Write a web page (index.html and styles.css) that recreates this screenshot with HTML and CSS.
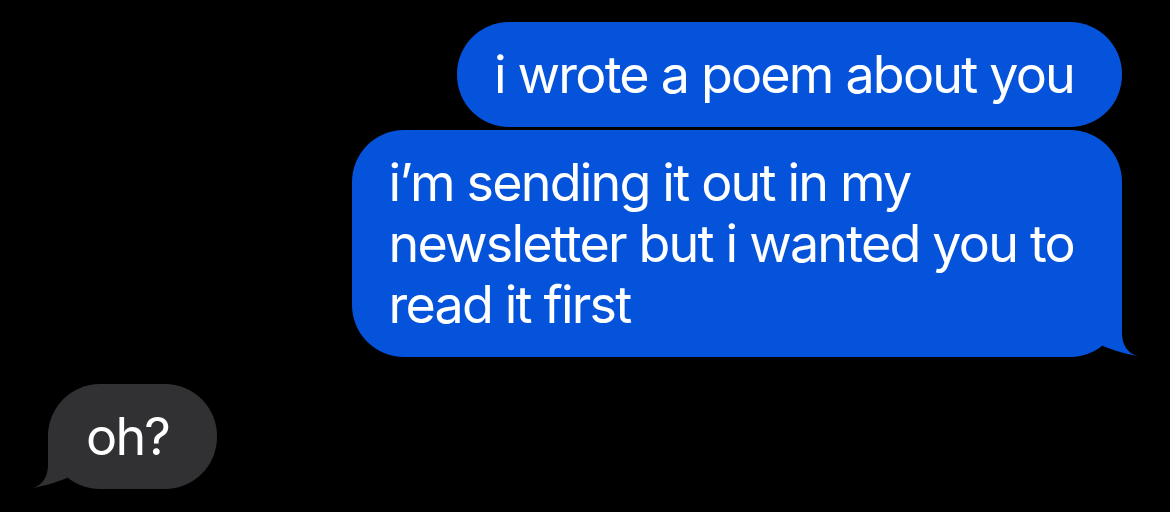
FILE: index.html
```html
<!DOCTYPE html>
<html lang="en">
<head>
  <meta charset="UTF-8" />
  <meta name="viewport" content="width=device-width, initial-scale=1.0"/>
  <title>Messages</title>
  <link rel="stylesheet" href="styles.css">
</head>
<body>
  <div class="thread">
    <div class="row sent">
      <div class="bubble"><span class="text">i wrote a poem about you</span></div>
    </div>

    <div class="row sent">
      <div class="bubble">
        <svg class="tail" width="72" height="56" viewBox="0 0 72 56">
          <path d="M0 0 H54 V32 C54 44 60 53 70 55 C62 54 44 49 35 45 Z" />
        </svg>
        <span class="text">i’m sending it out in my<br>newsletter but i wanted you to<br>read it first</span>
      </div>
    </div>

    <div class="row received">
      <div class="bubble">
        <svg class="tail" width="72" height="56" viewBox="0 0 72 56">
          <path d="M72 0 H18 V32 C18 44 12 53 2 55 C10 54 28 49 37 45 Z" />
        </svg>
        <span class="text">oh?</span>
      </div>
    </div>
  </div>
</body>
</html>
```

FILE: styles.css
```css
body {
  margin: 0;
  background-color: black;
  font-family: Inter, "Noto Sans", sans-serif;
}

.thread {
  display: flex;
  flex-direction: column;
  padding: 22px 48px;
}

.row {
  display: flex;
}

.sent {
  justify-content: flex-end;
  margin-bottom: 3px;
}

.received {
  justify-content: flex-start;
  margin-top: 24px;
}

.bubble {
  position: relative;
  padding: 22px 48px 22px 37px;
  border-radius: 52px;
  font-size: 52px;
  line-height: 61px;
  letter-spacing: -1.8px;
  color: white;
  background-color: #0453da;
}

.text {
  position: relative;
}

.received .bubble {
  padding: 22px 48px 22px 38px;
  background-color: #313133;
}

.tail {
  position: absolute;
  bottom: 0;
  right: -18px;
  fill: #0453da;
}

.received .tail {
  right: auto;
  left: -18px;
  fill: #313133;
}
```
